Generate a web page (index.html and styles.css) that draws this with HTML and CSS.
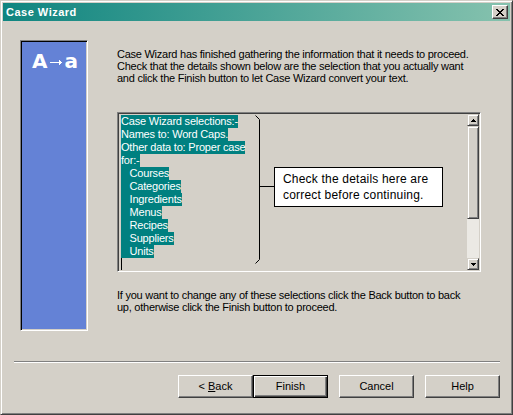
FILE: index.html
```html
<!DOCTYPE html>
<html>
<head>
<meta charset="utf-8">
<link rel="stylesheet" href="styles.css">
</head>
<body>
<div class="window">
  <div class="titlebar">
    <span class="title">Case Wizard</span>
    <span class="close"><svg width="8" height="7" viewBox="0 0 8 7"><path d="M0 0h2v1h1v1h2V1h1V0h2v1H7v1H6v1H5v1h1v1h1v1h1v1H6V6H5V5H3v1H2v1H0V6h1V5h1V4h1V3H2V2H1V1H0z" fill="#000"/></svg></span>
  </div>
  <div class="body">
    <div class="top">
      <div class="panel">
        <div class="logo"><span class="big">A</span><span class="arrow"><svg width="12" height="5" viewBox="0 0 12 5"><path d="M0 2h9V0h1v1h1v1h1v1h-1v1h-1v1H9V3H0z" fill="#fff"/></svg></span><span class="big">a</span></div>
      </div>
      <div class="col">
        <p class="intro">Case Wizard has finished gathering the information that it needs to proceed.<br>Check that the details shown below are the selection that you actually want<br>and click the Finish button to let Case Wizard convert your text.</p>
        <div class="listbox">
          <div class="lines">
            <div class="line"><span class="sel">Case Wizard selections:-</span></div>
            <div class="line"><span class="sel">Names to: Word Caps.</span></div>
            <div class="line"><span class="sel">Other data to: Proper case</span></div>
            <div class="line"><span class="sel">for:-</span></div>
            <div class="line"><span class="sel">   Courses</span></div>
            <div class="line"><span class="sel">   Categories</span></div>
            <div class="line"><span class="sel">   Ingredients</span></div>
            <div class="line"><span class="sel">   Menus</span></div>
            <div class="line"><span class="sel">   Recipes</span></div>
            <div class="line"><span class="sel">   Suppliers</span></div>
            <div class="line"><span class="sel">   Units</span></div>
            <div class="caret"></div>
          </div>
          <div class="scrollbar">
            <div class="sbtn"><svg width="5" height="3" viewBox="0 0 5 3"><path d="M2 0h1v1h1v1h1v1H0V2h1V1h1z" fill="#000"/></svg></div>
            <div class="thumb"></div>
            <div class="track"></div>
            <div class="sbtn"><svg width="5" height="3" viewBox="0 0 5 3"><path d="M0 0h5v1H4v1H3v1H2V2H1V1H0z" fill="#000"/></svg></div>
          </div>
          <svg class="bracket" width="30" height="156" viewBox="0 0 30 156"><path d="M6.5 2.5L10.5 6.5V146.5L6.5 150.5M10.5 73.5H25" fill="none" stroke="#000" stroke-width="1"/></svg>
          <div class="callout">Check the details here are<br>correct before continuing.</div>
        </div>
        <p class="outro">If you want to change any of these selections click the Back button to back<br>up, otherwise click the Finish button to proceed.</p>
      </div>
    </div>
    <div class="sep"></div>
    <div class="actions">
      <div class="btn back"><span>&lt; <u>B</u>ack</span></div>
      <div class="btn default"><span>Finish</span></div>
      <div class="btn gap"><span>Cancel</span></div>
      <div class="btn gap"><span>Help</span></div>
    </div>
  </div>
</div>
</body>
</html>
```
FILE: styles.css
```css
* { box-sizing: border-box; }
html, body { margin: 0; padding: 0; background: #d4d0c8; }
body { font-family: "Liberation Sans", Arial, sans-serif; font-size: 11px; color: #000; }
.window {
  width: 513px; height: 415px;
  background: #d4d0c8;
  border: 1px solid; border-color: #d4d0c8 #404040 #404040 #d4d0c8;
  box-shadow: inset 1px 1px 0 #fff, inset -1px -1px 0 #808080;
  padding: 2px;
  display: flex; flex-direction: column;
}
.titlebar {
  height: 18px;
  background: linear-gradient(to right, #0f8580, #86c2ae);
  display: flex; align-items: center; justify-content: space-between;
  padding: 0 2px 0 3px;
}
.title { color: #fff; font-weight: bold; font-size: 11px; letter-spacing: 0.5px; }
.close {
  width: 16px; height: 14px; background: #d4d0c8;
  border: 1px solid; border-color: #fff #404040 #404040 #fff;
  box-shadow: inset -1px -1px 0 #808080;
  display: flex; align-items: center; justify-content: center;
}
.body { flex: 1; display: flex; flex-direction: column; }
.top { display: flex; padding: 19px 0 0 17px; }
.panel {
  width: 68px; height: 291px;
  border: 1px solid; border-color: #808080 #fff #fff #808080;
  box-shadow: inset 1px 1px 0 #000, inset -1px -1px 0 #d4d0c8;
  background: #6482d6;
  padding: 9px 0 0 11px;
}
.logo { display: flex; align-items: center; color: #fff; font-weight: bold; font-family: "DejaVu Sans", sans-serif; }
.big { font-size: 20px; line-height: 22px; }
.arrow { display: flex; margin: 2px 2px 0 3px; }
.col { margin-left: 29px; padding-top: 8px; }
p { margin: 0; white-space: nowrap; line-height: 12px; }
.intro { letter-spacing: -0.25px; }
.outro { margin-top: 17px; letter-spacing: -0.25px; }
.listbox {
  position: relative;
  margin-top: 28px;
  width: 364px; height: 160px;
  border: 1px solid; border-color: #808080 #fff #fff #808080;
  box-shadow: inset 1px 1px 0 #404040, inset -1px -1px 0 #d4d0c8;
  padding: 1px;
  display: flex; justify-content: space-between;
}
.lines { padding: 1px 0 0 2px; }
.line { height: 13px; }
.sel { display: inline-block; height: 13px; line-height: 13px; background: #008080; color: #fff; white-space: pre; letter-spacing: -0.2px; vertical-align: top; }
.caret { width: 1px; height: 13px; background: #000; margin-top: -1px; }
.scrollbar { width: 12px; display: flex; flex-direction: column; }
.sbtn {
  height: 12px; background: #d4d0c8;
  border: 1px solid; border-color: #d4d0c8 #404040 #404040 #d4d0c8;
  box-shadow: inset 1px 1px 0 #fff, inset -1px -1px 0 #808080;
  display: flex; align-items: center; justify-content: center;
}
.thumb {
  height: 93px; background: #d4d0c8;
  border: 1px solid; border-color: #d4d0c8 #404040 #404040 #d4d0c8;
  box-shadow: inset 1px 1px 0 #fff, inset -1px -1px 0 #808080;
}
.track { flex: 1; background: #ebe9e4; }
.bracket { position: absolute; left: 131px; top: 0; }
.callout {
  position: absolute; left: 156px; top: 54px;
  width: 169px; height: 40px;
  background: #fff; border: 1px solid #000;
  font-size: 12px; line-height: 16px; letter-spacing: 0.2px;
  padding: 3px 0 0 8px;
  white-space: nowrap;
}
.sep { margin: 30px 0 0 11px; width: 486px; height: 2px; border-top: 1px solid #808080; border-bottom: 1px solid #fff; }
.actions { display: flex; justify-content: flex-end; padding-right: 10px; margin-top: 12px; }
.btn {
  width: 75px; height: 23px; background: #d4d0c8;
  border: 1px solid; border-color: #fff #404040 #404040 #fff;
  box-shadow: inset -1px -1px 0 #808080;
  display: flex; align-items: center; justify-content: center;
  padding-bottom: 1px;
}
.btn.default { border: 1px solid #000; box-shadow: inset 1px 1px 0 #fff, inset -1px -1px 0 #404040, inset -2px -2px 0 #808080; }
.btn.gap { margin-left: 11px; }
```
